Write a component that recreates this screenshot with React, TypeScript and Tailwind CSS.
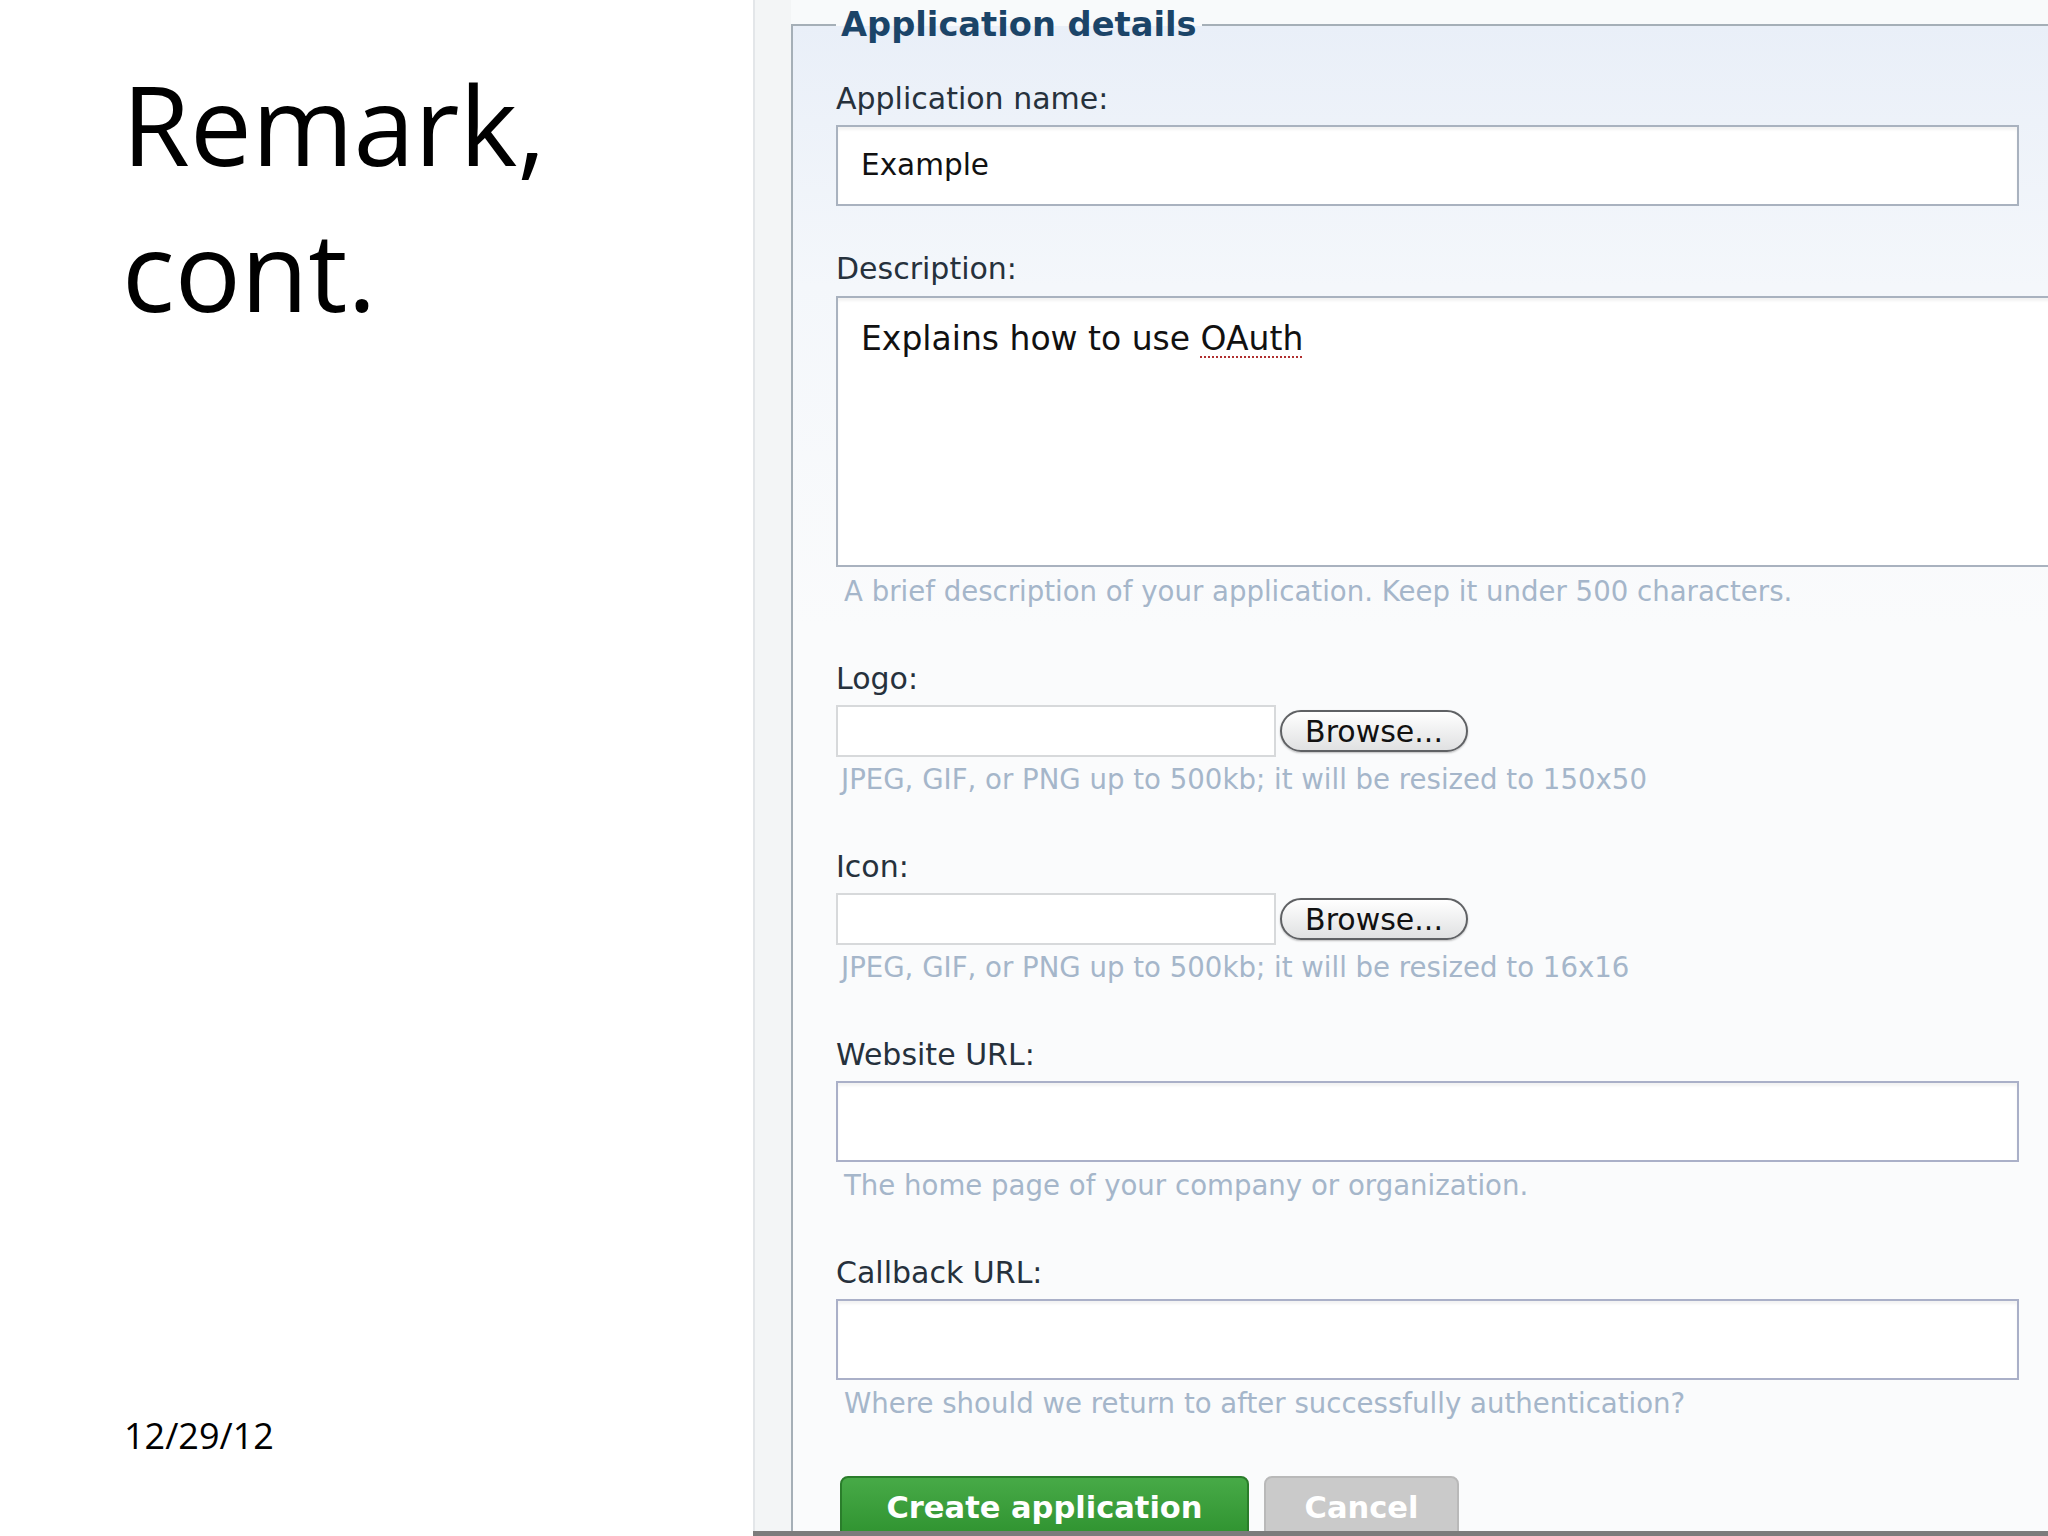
import React from "react";

const Label = ({ children, className = "" }: { children: React.ReactNode; className?: string }) => (
  <div className={"text-[30px] leading-[36px] text-[#26313c] " + className}>{children}</div>
);

const Hint = ({ children, className = "" }: { children: React.ReactNode; className?: string }) => (
  <div className={"text-[27.6px] leading-[30px] text-[#a5b6ca] " + className}>{children}</div>
);

const TextBox = ({ children, className = "" }: { children?: React.ReactNode; className?: string }) => (
  <div
    className={
      "mt-2 flex h-[81px] w-[1183px] items-center border-2 border-[#a9b2bf] bg-white pl-[23px] text-[29.5px] text-[#111] shadow-[inset_0_3px_3px_rgba(0,0,0,0.05)] " +
      className
    }
  >
    {children}
  </div>
);

const FileRow = () => (
  <div className="mt-2 flex h-[52px] items-center">
    <div className="h-[52px] w-[440px] border-2 border-[#d7d9db] bg-white" />
    <div className="ml-[4px] flex h-[42px] w-[188px] items-center justify-center rounded-full border-2 border-[#5f6164] bg-gradient-to-b from-white to-[#e0e1e2] text-[30px] text-[#111] shadow-[0_1px_2px_rgba(0,0,0,0.25)]">
      Browse...
    </div>
  </div>
);

export default function App() {
  return (
    <div className="flex h-[1536px] w-[2048px] overflow-hidden bg-white">
      <div className="flex w-[753px] shrink-0 flex-col justify-between pb-[80px] pl-[122px] pt-[50px] font-['Open_Sans',sans-serif] text-black">
        <div className="text-[110px] leading-[146px]">
          Remark,
          <br />
          cont.
        </div>
        <div className="pl-[2px] text-[36px] leading-[40px]">12/29/12</div>
      </div>

      <div className="flex min-w-0 flex-1 flex-col font-['DejaVu_Sans',sans-serif]">
        <div className="flex min-h-0 flex-1 overflow-hidden bg-[#f8fafb]">
          <div className="w-[38px] shrink-0 border-l-2 border-[#e3e6e9] bg-[#f3f5f6]" />
          <div className="shrink-0 pt-[6px]">
            <fieldset className="w-[1400px] border-l-2 border-t-2 border-[#a5afb7] bg-[linear-gradient(to_bottom,#e9eff8_0px,#f4f7fb_260px,#fafbfc_600px)] pl-[43px] pt-[37px]">
              <legend className="px-[5px] text-[33.7px] font-bold leading-[38px] text-[#1b4468]">
                Application details
              </legend>

              <Label>Application name:</Label>
              <TextBox>Example</TextBox>

              <Label className="mt-[45px]">Description:</Label>
              <div className="mt-[9px] h-[271px] w-[1300px] border-2 border-[#a9b2bf] bg-white pl-[23px] pt-[21px] text-[33px] leading-[40px] text-[#111] shadow-[inset_0_3px_3px_rgba(0,0,0,0.05)]">
                Explains how to use{" "}
                <span className="underline decoration-[#b03030] decoration-dotted decoration-2 underline-offset-[6px]">
                  OAuth
                </span>
              </div>
              <Hint className="mt-[10px] pl-[8px]">
                A brief description of your application. Keep it under 500 characters.
              </Hint>

              <Label className="mt-[54px]">Logo:</Label>
              <FileRow />
              <Hint className="mt-2 pl-[5px]">JPEG, GIF, or PNG up to 500kb; it will be resized to 150x50</Hint>

              <Label className="mt-[54px]">Icon:</Label>
              <FileRow />
              <Hint className="mt-2 pl-[5px]">JPEG, GIF, or PNG up to 500kb; it will be resized to 16x16</Hint>

              <Label className="mt-[54px]">Website URL:</Label>
              <TextBox className="border-[#aab0c8]" />
              <Hint className="mt-[9px] pl-[8px]">The home page of your company or organization.</Hint>

              <Label className="mt-[54px]">Callback URL:</Label>
              <TextBox className="border-[#aab0c8]" />
              <Hint className="mt-[9px] pl-[8px]">Where should we return to after successfully authentication?</Hint>

              <div className="ml-[4px] mt-[57px] flex gap-[15px] pb-[40px]">
                <div className="flex h-[64px] w-[409px] items-center justify-center rounded-t-[8px] border-2 border-[#2a7d2b] bg-gradient-to-b from-[#47aa47] to-[#2e922f] text-[30.5px] font-bold text-white">
                  Create application
                </div>
                <div className="flex h-[64px] w-[195px] items-center justify-center rounded-t-[8px] border-2 border-[#b9b9b9] bg-[#cacaca] text-[30.5px] font-bold text-white">
                  Cancel
                </div>
              </div>
            </fieldset>
          </div>
        </div>
        <div className="h-[5px] shrink-0 bg-[#7c7c7c]" />
      </div>
    </div>
  );
}
